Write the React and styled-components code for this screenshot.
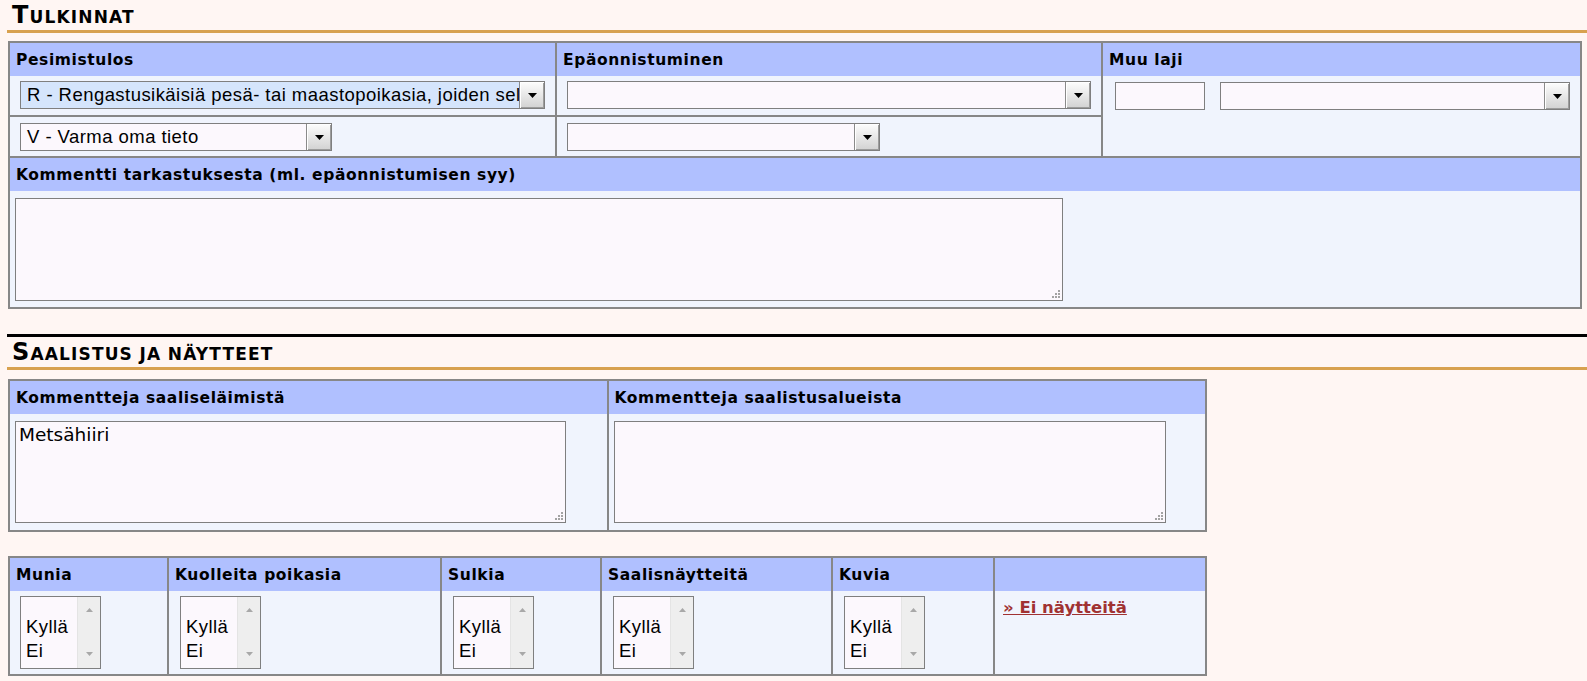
import styled, { createGlobalStyle } from "styled-components";

const GlobalStyle = createGlobalStyle`
  html, body {
    margin: 0;
    background: #fff6f3;
    overflow: hidden;
  }
  body {
    font-family: "DejaVu Sans", Verdana, sans-serif;
    color: #000;
  }
`;

const Page = styled.div`
  padding: 0 0 6px 7px;
`;

const Heading = styled.h2`
  margin: 0;
  padding: 2px 0 2px 5px;
  font: bold 24px/26px "DejaVu Sans", Verdana, sans-serif;
  font-variant: small-caps;
  letter-spacing: 1.15px;
  word-spacing: -3px;
  color: #000;
  border-bottom: 3px solid #d8a14f;
`;

const Rule = styled.div`
  margin-top: 25px;
  border-top: 3px solid #000;
`;

const Grid = styled.div`
  display: grid;
  grid-template-columns: ${(p) => p.$cols};
  gap: 2px;
  box-sizing: border-box;
  width: ${(p) => p.$width}px;
  margin: ${(p) => p.$mt ?? 8}px 0 0 1px;
  border: 2px solid #878787;
  background: #878787;
`;

const Cell = styled.div`
  display: flex;
  flex-direction: column;
  background: #f0f4fd;
  grid-column: ${(p) => p.$span || "auto"};
  grid-row: ${(p) => p.$rows || "auto"};
`;

const Label = styled.div`
  height: 33px;
  display: flex;
  align-items: center;
  padding: 0 6px;
  background: #b0c0ff;
  font: bold 15.5px "DejaVu Sans", Verdana, sans-serif;
  letter-spacing: 0.6px;
  white-space: nowrap;
`;

const Body = styled.div`
  display: flex;
  align-items: flex-start;
  gap: ${(p) => p.$gap || 0}px;
  padding: ${(p) => p.$pad || "5px 10px 6px"};
`;

const SelectBox = styled.div`
  display: flex;
  box-sizing: border-box;
  width: ${(p) => p.$w || "100%"};
  height: 28px;
  border: 1px solid #7f7f7f;
  background: ${(p) => (p.$active ? "#d5e5fc" : "#fcf8fd")};
  font: 18.5px "Liberation Sans", Arial, sans-serif;
  letter-spacing: 0.45px;
`;

const SelectText = styled.span`
  flex: 1;
  min-width: 0;
  overflow: hidden;
  white-space: nowrap;
  padding-left: 6px;
  line-height: 26px;
`;

const SelectButton = styled.span`
  flex: 0 0 24px;
  display: flex;
  align-items: center;
  justify-content: center;
  border-left: 1px solid #8a8a8a;
  background: linear-gradient(#fdfdfd, #d2d2d2);
  box-shadow: inset 1px 1px 0 #fff, inset -1px -1px 0 #9c9c9c;
`;

const TextInput = styled.div`
  box-sizing: border-box;
  width: 90px;
  height: 28px;
  border: 1px solid #7f7f7f;
  background: #fcf8fd;
`;

const AreaWrap = styled.div`
  position: relative;
  width: ${(p) => p.$w}px;
  height: ${(p) => p.$h}px;
`;

const Area = styled.textarea`
  display: block;
  box-sizing: border-box;
  width: 100%;
  height: 100%;
  margin: 0;
  padding: 2px 3px;
  border: 1px solid #7f7f7f;
  background: #fcf8fd;
  resize: none;
  outline: none;
  font: 18.5px "DejaVu Sans", Verdana, sans-serif;
  color: #000;
`;

const Grip = styled.svg`
  position: absolute;
  right: 3px;
  bottom: 3px;
`;

const ListBox = styled.div`
  display: flex;
  box-sizing: border-box;
  width: 81px;
  height: 73px;
  border: 1px solid #7f7f7f;
  background: #fcf8fd;
  overflow: hidden;
`;

const Options = styled.div`
  flex: 1;
  padding-left: 5px;
  font: 18.5px "Liberation Sans", Arial, sans-serif;
  letter-spacing: 0.45px;
`;

const Option = styled.div`
  height: ${(p) => (p.$blank ? 18 : 24)}px;
  line-height: 24px;
`;

const ScrollTrack = styled.div`
  width: 23px;
  box-sizing: border-box;
  padding: 11px 0 12px;
  display: flex;
  flex-direction: column;
  justify-content: space-between;
  align-items: center;
  background: #eeeeee;
  border-left: 1px solid #e4e4e4;
`;

const Link = styled.a`
  font: bold 16.5px "DejaVu Sans", Verdana, sans-serif;
  color: #a03232;
  text-decoration: underline;
  cursor: pointer;
`;

function Select({ text = "", w, active }) {
  return (
    <SelectBox $w={w} $active={active}>
      <SelectText>{text}</SelectText>
      <SelectButton>
        <svg width="9" height="5" viewBox="0 0 9 5">
          <polygon points="0,0 9,0 4.5,5" fill="#000" />
        </svg>
      </SelectButton>
    </SelectBox>
  );
}

function TextArea({ w, h, value = "" }) {
  return (
    <AreaWrap $w={w} $h={h}>
      <Area defaultValue={value} spellCheck={false} />
      <Grip width="9" height="9" viewBox="0 0 9 9">
        <g fill="#a3a3a3">
          <rect x="7" y="1" width="2" height="2" />
          <rect x="4" y="4" width="2" height="2" />
          <rect x="7" y="4" width="2" height="2" />
          <rect x="1" y="7" width="2" height="2" />
          <rect x="4" y="7" width="2" height="2" />
          <rect x="7" y="7" width="2" height="2" />
        </g>
      </Grip>
    </AreaWrap>
  );
}

function YesNo() {
  return (
    <ListBox>
      <Options>
        <Option $blank />
        <Option>Kyllä</Option>
        <Option>Ei</Option>
      </Options>
      <ScrollTrack>
        <svg width="7" height="4" viewBox="0 0 7 4">
          <polygon points="0,4 7,4 3.5,0" fill="#a8a8a8" />
        </svg>
        <svg width="7" height="4" viewBox="0 0 7 4">
          <polygon points="0,0 7,0 3.5,4" fill="#a8a8a8" />
        </svg>
      </ScrollTrack>
    </ListBox>
  );
}

const samples = ["Munia", "Kuolleita poikasia", "Sulkia", "Saalisnäytteitä", "Kuvia"];

export default function App() {
  return (
    <Page>
      <GlobalStyle />
      <Heading>Tulkinnat</Heading>
      <Grid $cols="545px 544px 1fr" $width={1574}>
        <Cell>
          <Label>Pesimistulos</Label>
          <Body>
            <Select
              active
              text="R - Rengastusikäisiä pesä- tai maastopoikasia, joiden selviytymisestä ei tietoa"
            />
          </Body>
        </Cell>
        <Cell>
          <Label>Epäonnistuminen</Label>
          <Body>
            <Select />
          </Body>
        </Cell>
        <Cell $rows="span 2">
          <Label>Muu laji</Label>
          <Body $pad="6px 10px 6px 12px" $gap={15}>
            <TextInput />
            <Select w="350px" />
          </Body>
        </Cell>
        <Cell>
          <Body $pad="6px 10px 5px">
            <Select w="312px" text="V - Varma oma tieto" />
          </Body>
        </Cell>
        <Cell>
          <Body $pad="6px 10px 5px">
            <Select w="313px" />
          </Body>
        </Cell>
        <Cell $span="1 / -1">
          <Label>Kommentti tarkastuksesta (ml. epäonnistumisen syy)</Label>
          <Body $pad="7px 5px 6px">
            <TextArea w={1048} h={103} />
          </Body>
        </Cell>
      </Grid>

      <Rule />
      <Heading>Saalistus ja näytteet</Heading>
      <Grid $cols="1fr 1fr" $width={1199} $mt={9}>
        <Cell>
          <Label>Kommentteja saaliseläimistä</Label>
          <Body $pad="7px 5px">
            <TextArea w={551} h={102} value="Metsähiiri" />
          </Body>
        </Cell>
        <Cell>
          <Label>Kommentteja saalistusalueista</Label>
          <Body $pad="7px 5px">
            <TextArea w={552} h={102} />
          </Body>
        </Cell>
      </Grid>

      <Grid $cols="157px 271px 158px 229px 160px 1fr" $width={1199} $mt={24}>
        {samples.map((s, i) => (
          <Cell key={s}>
            <Label>{s}</Label>
            <Body $pad={i === 0 ? "5px 10px" : "5px 11px"}>
              <YesNo />
            </Body>
          </Cell>
        ))}
        <Cell>
          <Label />
          <Body $pad="7px 8px">
            <Link>» Ei näytteitä</Link>
          </Body>
        </Cell>
      </Grid>
    </Page>
  );
}
